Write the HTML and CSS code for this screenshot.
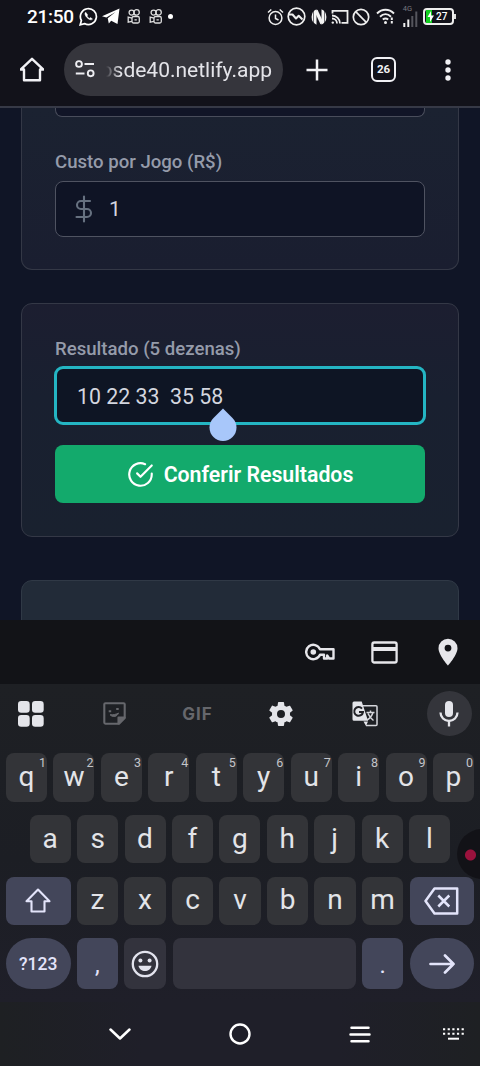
FILE: index.html
```html
<!DOCTYPE html>
<html lang="pt-BR">
<head>
<meta charset="utf-8">
<meta name="viewport" content="width=device-width, initial-scale=1">
<title>Conferir Resultados</title>
<link rel="stylesheet" href="styles.css">
</head>
<body>
<div class="phone">
  <header class="status">
    <span class="clock">21:50</span>
    <svg class="st-wa" width="19" height="19" viewBox="0 0 19 19" fill="none" stroke="#fff" stroke-width="1.7"><path d="M1.2 17.8 2.4 13.500A8 8 0 1 1 5.500 16.600Z"/><path d="M6.700 5.200c-1.500 1-.7 3.400 1.400 5.500s4.300 2.800 5.400 1.400l-1.900-1.500-1.200.8c-1.200-.5-1.900-1.200-2.400-2.400l.7-1z" fill="#fff" stroke-width=".5"/></svg>
    <svg class="st-tg" width="18" height="17" viewBox="0 0 18 17"><path fill="#fff" d="M0 8.200 17.500.5 15.500 16 9.200 12.700 6.800 15.500 5.700 10.300 13.500 4 4.400 9.500Z"/></svg>
    <svg class="st-kw" width="13" height="15" viewBox="0 0 13 15" fill="none" stroke="#ddd" stroke-width="1.300"><circle cx="4.600" cy="3.600" r="2.500"/><circle cx="9.600" cy="3.400" r="2.700"/><rect x="5" y="7.500" width="7.300" height="6.500" rx="1.500"/><path d="M5 9.200 1.200 8.200v5l3.800-.8M7.500 10.800h2.300"/></svg>
    <svg class="st-kw2" width="13" height="15" viewBox="0 0 13 15" fill="none" stroke="#ddd" stroke-width="1.300"><circle cx="4.600" cy="3.600" r="2.500"/><circle cx="9.600" cy="3.400" r="2.700"/><rect x="5" y="7.500" width="7.300" height="6.500" rx="1.500"/><path d="M5 9.200 1.200 8.200v5l3.800-.8M7.500 10.800h2.300"/></svg>
    <i class="st-dot"></i>
    <div class="status-right">
      <svg width="17" height="18" viewBox="0 0 17 18" fill="none" stroke="#eee" stroke-width="1.500"><circle cx="8.500" cy="10" r="6.400"/><path d="M8.500 6.500V10.500l3 1.500M1 4.500 4.300 1.500M16 4.500 12.700 1.500"/></svg>
      <svg width="19" height="19" viewBox="0 0 19 19" fill="none" stroke="#eee" stroke-width="1.700"><circle cx="9.500" cy="9.500" r="8.300"/><path d="M2 7.500 5.500 7.500 9 11.500 11.700 8.700 15.500 12.500" stroke-width="2" stroke-linejoin="round"/></svg>
      <svg width="18" height="18" viewBox="0 0 18 18"><path fill="#f4f4f4" d="M6.500 1.300A8.500 8.500 0 0 0 6.500 16.700ZM11.500 1.300A8.500 8.500 0 0 1 11.500 16.700Z"/><path d="M6 2.500 12 15.500" stroke="#f4f4f4" stroke-width="3.400"/><path d="M3.500 3v12M14.500 3v12" stroke="#12121a" stroke-width=".6"/></svg>
      <svg width="18" height="16" viewBox="0 0 18 16" fill="none" stroke="#eee" stroke-width="1.800"><path d="M1.500 4.500V1.800h15v12h-6M1 6.500a8 8 0 0 1 8 8M1 9.500a5 5 0 0 1 5 5"/><circle cx="1.800" cy="13.600" r="1.200" fill="#eee" stroke="none"/></svg>
      <svg width="18" height="18" viewBox="0 0 18 18" fill="none" stroke="#eee" stroke-width="1.700"><circle cx="9" cy="9" r="7.700"/><path d="M3.700 3.700 14.300 14.300"/></svg>
      <svg class="wifi" width="20" height="17" viewBox="0 0 20 17" fill="none" stroke="#eee" stroke-width="1.900"><path d="M1 5.500c5-5 12-5 17 0M4 8.700c3.300-3.200 7.700-3.200 11 0M6.800 11.600c1.800-1.500 3.600-1.500 5.400 0"/><circle cx="9.500" cy="14.500" r="1.500" fill="#eee" stroke="none"/><path d="M15.800 9.500v2.500M15.800 13v2.500" stroke-width="2"/></svg>
      <div class="signal"><span>4G</span><svg width="15" height="17" viewBox="0 0 15 17"><path d="M1.300 17v-4M5.300 17V9.500" stroke="#eee" stroke-width="2"/><path d="M9.300 17V6M13.300 17V1.500" stroke="#55555d" stroke-width="2"/></svg></div>
      <div class="battery"><svg width="8" height="13" viewBox="0 0 8 13"><path fill="#13cf20" d="M0 0h6v13H0z"/><path fill="#fff" d="M5 1 1.500 7H4v5l4-6.500H5z"/></svg><span>27</span></div>
    </div>
  </header>

  <nav class="toolbar">
    <svg class="home" width="24" height="25" viewBox="0 0 24 25" fill="none" stroke="#f1f1f5" stroke-width="2.400" stroke-linejoin="round"><path d="M.8 12.500H4V23.200H20V12.500h3.200L12 1.800Z"/></svg>
    <div class="omnibox">
      <svg width="20" height="18" viewBox="0 0 20 18" fill="none" stroke="#eeeef2" stroke-width="1.900"><circle cx="4" cy="4" r="2.900"/><path d="M9.500 4H19M.8 13.500H9.500"/><circle cx="15.700" cy="13.300" r="2.900"/></svg>
      <div class="url"><span>osde40.netlify.app</span></div>
    </div>
    <svg class="plus" width="22" height="22" viewBox="0 0 22 22" stroke="#f1f1f5" stroke-width="2.500"><path d="M11 .5v21M.5 11h21"/></svg>
    <div class="tabs">26</div>
    <svg class="dots" width="6" height="22" viewBox="0 0 6 22" fill="#f1f1f5"><circle cx="3" cy="3" r="2.700"/><circle cx="3" cy="11" r="2.700"/><circle cx="3" cy="19" r="2.700"/></svg>
  </nav>

  <main class="page">
    <section class="card card-cost">
      <div class="field-tail"></div>
      <label class="label">Custo por Jogo (R$)</label>
      <div class="field">
        <svg width="18" height="28" viewBox="0 0 18 28" fill="none" stroke="#667180" stroke-width="2.100" stroke-linecap="round" stroke-linejoin="round"><path d="M9 1.500v25M15 6H6a4 4 0 0 0 0 8h6a4 4 0 0 1 0 8H1.500"/></svg>
        <span>1</span>
      </div>
    </section>
    <section class="card card-result">
      <label class="label">Resultado (5 dezenas)</label>
      <div class="field field-focus"><span>10 22 33&nbsp; 35 58</span>
        <svg class="handle" width="28" height="33" viewBox="0 0 28 33"><path fill="#a8c7fa" d="M14 .5 23.500 9.900A13.500 13.500 0 1 1 4.500 9.900Z"/></svg>
      </div>
      <button class="submit">
        <svg width="27" height="27" viewBox="0 0 24 24" fill="none" stroke="#fff" stroke-width="1.900" stroke-linecap="round" stroke-linejoin="round"><path d="M22 11.080V12a10 10 0 1 1-5.930-9.140"/><path d="m9 11 3 3L22 4"/></svg>
        <span>Conferir Resultados</span>
      </button>
    </section>
    <section class="card card-next"></section>
  </main>

  <div class="autofill">
    <svg width="30" height="18" viewBox="0 0 30 18" fill="none" stroke="#e6e6ea" stroke-width="2.400" stroke-linejoin="round"><path d="M15 6.200A7.200 7.200 0 1 0 15 11.800H19V15.500h3.200v-3l2 3H28.500V6.200Z"/><circle cx="8.300" cy="9" r="2.800" fill="#e6e6ea" stroke="none"/></svg>
    <svg width="27" height="23" viewBox="0 0 27 23" fill="none" stroke="#e6e6ea" stroke-width="2.300"><rect x="1.400" y="1.500" width="24.200" height="20" rx="1.800"/><path d="M1.400 8h24.200" stroke-width="4"/></svg>
    <svg width="20" height="28" viewBox="0 0 20 28"><path fill="#e6e6ea" fill-rule="evenodd" d="M10 .7A9.500 9.500 0 0 0 .5 10.200C.5 17 10 27.500 10 27.500S19.500 17 19.500 10.200A9.500 9.500 0 0 0 10 .7Zm0 6a3.400 3.400 0 1 1 0 6.800 3.400 3.400 0 0 1 0-6.800Z"/></svg>
  </div>

  <div class="keyboard">
    <div class="tools">
      <div class="tool"><svg width="26" height="26" viewBox="0 0 26 26" fill="#e4e5ea"><rect x="0" y="0" width="11.700" height="11.700" rx="3.200"/><rect x="14" y="0" width="11.700" height="11.700" rx="3.200"/><rect x="0" y="14" width="11.700" height="11.700" rx="3.200"/><rect x="14" y="14" width="11.700" height="11.700" rx="3.200"/></svg></div>
      <div class="tool"><svg width="23" height="23" viewBox="0 0 23 23" fill="none" stroke="#66676c" stroke-width="2.100" stroke-linejoin="round"><path d="M1.300 2.300Q1.300 1.200 2.400 1.200H20.600Q21.700 1.200 21.700 2.300V16L16 21.700H2.400Q1.300 21.700 1.300 20.600Z"/><path d="M21.500 15.500H15.500V21.500Z" fill="#66676c"/><path d="M7 12.700c3 3.200 7.200 2 8.500-1.700-2.500 1.500-5 1.900-8.500 1.700Z" fill="#66676c" stroke-width="1"/><path d="M5.700 9.300h2.500M13.200 7h2.500"/></svg></div>
      <div class="tool gif">GIF</div>
      <div class="tool"><svg width="30" height="30" viewBox="0 0 24 24" fill="#e4e5ea"><path d="M19.140 12.940c.04-.3.060-.61.060-.94 0-.32-.02-.64-.07-.94l2.030-1.580c.18-.14.230-.41.120-.61l-1.920-3.320c-.12-.22-.37-.29-.59-.22l-2.390.96c-.5-.38-1.030-.7-1.620-.94L14.400 2.810c-.04-.24-.24-.41-.48-.41h-3.840c-.24 0-.43.170-.47.410L9.250 5.350c-.59.240-1.130.570-1.620.940L5.240 5.330c-.22-.08-.47 0-.59.220L2.740 8.870c-.12.210-.08.470.12.610l2.030 1.580c-.05.3-.09.630-.09.940s.02.640.070.940l-2.030 1.580c-.18.140-.23.410-.12.610l1.920 3.320c.12.220.37.290.59.220l2.390-.96c.5.380 1.030.7 1.620.940l.36 2.540c.05.240.24.410.48.410h3.840c.24 0 .44-.17.470-.41l.36-2.540c.59-.24 1.130-.56 1.620-.94l2.390.96c.22.080.47 0 .59-.22l1.920-3.320c.12-.22.070-.47-.12-.61zM12 15.200a3.200 3.200 0 1 1 0-6.400 3.200 3.200 0 0 1 0 6.400z"/></svg></div>
      <div class="tool"><svg width="26" height="26" viewBox="0 0 26 26" fill="none"><path d="M10 4.700H24q1 0 1 1V23.500q0 1-1 1H14" stroke="#d5d6db" stroke-width="1.500"/><path fill="#e4e5ea" d="M2 .5H9.700L16 19.800H2Q.5 19.800.5 18.300V2Q.5.500 2 .5ZM11.500 20.500H16l-2 4.500Z"/><path d="M10 7.600A4.400 4.400 0 1 0 11 11H7" stroke="#202126" stroke-width="2"/><path d="M14.500 11.500h8M18.500 9.500v2M21 11.500q-1.500 5-6 7.500M16 12.500q2 4.500 5.500 7" stroke="#d5d6db" stroke-width="1.500"/></svg></div>
      <div class="tool mic"><svg width="20" height="27" viewBox="0 0 20 27" fill="none" stroke="#e4e5ea" stroke-width="2.300"><rect x="6" y="1" width="8" height="16" rx="4" fill="#e4e5ea" stroke="none"/><path d="M1.500 12.500a8.500 8.500 0 0 0 17 0M10 21v5.500"/></svg></div>
    </div>
    <div class="keys">
      <div class="row">
        <div class="key">q<sup>1</sup></div><div class="key">w<sup>2</sup></div><div class="key">e<sup>3</sup></div><div class="key">r<sup>4</sup></div><div class="key">t<sup>5</sup></div><div class="key">y<sup>6</sup></div><div class="key">u<sup>7</sup></div><div class="key">i<sup>8</sup></div><div class="key">o<sup>9</sup></div><div class="key">p<sup>0</sup></div>
      </div>
      <div class="row row-mid">
        <div class="key">a</div><div class="key">s</div><div class="key">d</div><div class="key">f</div><div class="key">g</div><div class="key">h</div><div class="key">j</div><div class="key">k</div><div class="key">l</div>
      </div>
      <div class="row">
        <div class="key wide accent"><svg width="26" height="25" viewBox="0 0 26 25" fill="none" stroke="#e3e4fa" stroke-width="2.100" stroke-linejoin="round"><path d="M13 1.500 24.500 13.200H19.500V23.500H6.500V13.200H1.500Z"/></svg></div>
        <div class="key">z</div><div class="key">x</div><div class="key">c</div><div class="key">v</div><div class="key">b</div><div class="key">n</div><div class="key">m</div>
        <div class="key wide accent"><svg width="35" height="28" viewBox="0 0 35 28" fill="none" stroke="#e3e4fa" stroke-width="2.500" stroke-linejoin="round"><path d="M1.500 14 10.500 1.500H33.200V26.500H10.500ZM14.300 8.500 25.300 19.500M25.300 8.500 14.300 19.500"/></svg></div>
      </div>
      <div class="row row-last">
        <div class="key wide accent round sym">?123</div>
        <div class="key accent punct">,</div>
        <div class="key dim"><svg width="28" height="28" viewBox="0 0 28 28" fill="none" stroke="#e3e4ee" stroke-width="2.300"><circle cx="14" cy="14" r="12.200"/><g fill="#e3e4ee" stroke="none"><circle cx="9.400" cy="10.500" r="2"/><circle cx="18.600" cy="10.500" r="2"/><path d="M7.500 15.800h13c-1.200 7-11.800 7-13 0Z"/></g></svg></div>
        <div class="key space dim"></div>
        <div class="key accent punct">.</div>
        <div class="key wide accent round"><svg width="26" height="20" viewBox="0 0 26 20" fill="none" stroke="#e3e4fa" stroke-width="2.700" stroke-linecap="round" stroke-linejoin="round"><path d="M1.500 10H24.500M16 1.500 24.500 10 16 18.500"/></svg></div>
      </div>
    </div>
    <div class="recorder"></div>
  </div>

  <footer class="nav">
    <svg width="22" height="13" viewBox="0 0 22 13" fill="none" stroke="#fff" stroke-width="2.500" stroke-linecap="round" stroke-linejoin="round"><path d="M1.500 1.500 11 10.500 20.500 1.500"/></svg>
    <svg width="22" height="22" viewBox="0 0 22 22" fill="none" stroke="#fff" stroke-width="2.400"><circle cx="11" cy="11" r="9.500"/></svg>
    <svg width="22" height="17" viewBox="0 0 22 17" stroke="#fff" stroke-width="2.500" stroke-linecap="round"><path d="M2.500 1.700h17M1.500 8.500h19M2.500 15.300h17"/></svg>
    <svg class="kb" width="21" height="12" viewBox="0 0 21 12" stroke="#fff" stroke-width="2"><path d="M0 1.300h21M0 5.800h21" stroke-dasharray="2.200 2.450"/><path d="M5 10.700h11"/></svg>
  </footer>
</div>
</body>
</html>
```

FILE: styles.css
```css
* { box-sizing: border-box; }
body { margin: 0; background: #101526; font-family: Roboto, "Noto Sans", sans-serif; }
svg { display: block; flex: none; }
.phone { width: 480px; height: 1066px; overflow: hidden; display: flex; flex-direction: column; }

/* status bar */
.status { height: 33px; flex: none; background: #12121a; display: flex; align-items: center; padding: 0 26px 0 27px; color: #fff; }
.clock { font-size: 19px; font-weight: 500; width: 52px; letter-spacing: -.3px; white-space: nowrap; }
.st-tg { margin-left: 4px; }
.st-kw { margin-left: 7px; }
.st-kw2 { margin-left: 9px; }
.st-dot { width: 5px; height: 5px; border-radius: 50%; background: #fff; margin-left: 6px; }
.status-right { margin-left: auto; display: flex; align-items: center; gap: 3.300px; }
.wifi { margin-left: 3px; }
.signal { width: 15px; height: 21px; margin: -1px 2px 0 3px; display: flex; flex-direction: column; position: relative; justify-content: flex-end; }
.signal span { position: absolute; left: 0; top: -1px; font-size: 7.500px; line-height: 8px; color: #77777f; }
.battery { width: 31px; height: 17px; border: 2px solid #eee; border-radius: 4px; display: flex; align-items: center; gap: 2px; padding-left: 1px; position: relative; font-size: 10px; font-weight: 500; }
.battery::after { content: ""; position: absolute; right: -4px; top: 4px; width: 2px; height: 5px; background: #ddd; }

/* browser toolbar */
.toolbar { height: 75px; flex: none; background: #12121a; border-bottom: 2px solid #363946; display: flex; align-items: center; padding: 0 29px 0 20px; }
.omnibox { width: 219px; height: 53px; margin-left: 20px; border-radius: 27px; background: #35353c; display: flex; align-items: center; padding: 0 11px; }
.omnibox svg { margin-bottom: 1px; }
.url { width: 174px; margin-left: 3px; display: flex; justify-content: flex-end; overflow: hidden; font-size: 21px; line-height: 30px; color: #e4e4e9; white-space: nowrap; -webkit-mask-image: linear-gradient(90deg, transparent 8px, #000 22px); mask-image: linear-gradient(90deg, transparent 8px, #000 22px); }
.plus { margin-left: 23px; }
.tabs { width: 25px; height: 25px; margin: 0 0 0 43px; border: 2.300px solid #f1f1f5; border-radius: 6px; color: #f1f1f5; font-size: 11.500px; font-weight: 700; line-height: 21px; text-align: center; }
.dots { margin-left: auto; }

/* page */
.page { height: 512px; flex: none; overflow: hidden; background: #101526; padding: 0 21px; }
.card { border: 1px solid #343846; border-radius: 11px; background: #1a2030; padding: 0 33px; width: 438px; }
.card-cost { height: 162px; border-top: 0; border-radius: 0 0 11px 11px; background: linear-gradient(#1b2231, #1a1e30); }
.card-result { height: 234px; margin-top: 33px; padding-top: 33px; background: linear-gradient(#1c1e30, #192030 40%, #19212f); }
.card-next { height: 60px; margin-top: 43px; background: #222b38; border-color: #303946; }
.field-tail { height: 9px; border: 1px solid #494d5b; border-top: 0; border-radius: 0 0 7px 7px; background: #111527; }
.label { display: block; height: 30px; font-size: 18.600px; font-weight: 500; line-height: 24px; color: #959baa; white-space: nowrap; }
.card-result .label { height: 29px; }
.card-cost .label { margin-top: 34px; }
.card-cost .label { line-height: 23px; }
.field { height: 56px; border: 1px solid #4f5361; border-radius: 8px; background: #0f1425; display: flex; align-items: center; padding-left: 19px; font-size: 21px; color: #d3d6df; }
.field svg + span { margin-left: 16px; }
.field-focus { position: relative; height: 59px; margin: 0 -1px; border: 3px solid #24b5c3; border-radius: 9px; background: #0e1524; padding: 1px 0 0 20px; font-size: 21.300px; }
.handle { position: absolute; left: 152px; top: 39px; }
.submit { width: 100%; height: 58px; margin-top: 20px; border: 0; border-radius: 8px; background: #13aa6c; color: #fff; display: flex; align-items: center; justify-content: center; gap: 10px; padding: 0; font: 600 21.300px Roboto, sans-serif; }

/* autofill bar */
.autofill { height: 64px; flex: none; background: #121317; display: flex; align-items: center; justify-content: flex-end; gap: 36px; padding-right: 22px; }
.autofill svg:last-child { margin-left: 4px; }

/* keyboard */
.keyboard { position: relative; height: 318px; flex: none; background: linear-gradient(#1e2024, #1c1e24 55%, #1f1f29); }
.tools { height: 59px; display: grid; grid-template-columns: repeat(5, 83.500px) 45px; padding: 0 8px; align-items: center; }
.tool { width: 45px; height: 45px; display: flex; align-items: center; justify-content: center; }
.gif { font: 700 17px Inter, sans-serif; color: #66676c; letter-spacing: 1px; }
.mic { border-radius: 50%; background: #34353b; margin-left: 1px; }
.keys { padding: 10px 6px 0; display: flex; flex-direction: column; gap: 13.300px; }
.row { display: flex; gap: 6.400px; height: 48.500px; }
.row-mid { padding: 0 24px 0 23.700px; }
.row-last { height: 50.500px; }
.key { flex: 1 1 0; position: relative; border-radius: 8px; background: #333438; color: #e3e4e8; display: flex; align-items: center; justify-content: center; font-size: 28px; line-height: 46px; padding: 0 0 1px 0; }
.key sup { position: absolute; right: 1px; top: 4px; font-size: 12.500px; line-height: 12px; color: #c4c5ca; }
.wide { flex: 0 0 64.500px; padding: 0; }
.accent { background: #43465a; color: #e3e4fa; }
.dim { background: #33333d; padding: 0 1px 0 0; }
.round { border-radius: 26px; }
.sym { font-size: 17.500px; font-weight: 500; }
.punct { font-size: 24px; padding-top: 3px; }
.space { flex: 0 0 183.200px; }
.recorder { position: absolute; right: -27px; top: 145px; width: 50px; height: 50px; border-radius: 50%; background: radial-gradient(circle at 13.500px 26px, #9b123d 5px, #121217 6px); }

/* system navigation */
.nav { flex: 1; background: linear-gradient(90deg, #1e2023, #1f1f29 30%, #1f1f29 70%, #1e2023); display: grid; grid-template-columns: 120px 120px 120px; column-gap: 0; padding-left: 60px; position: relative; justify-items: center; align-items: center; }
.nav .kb { position: absolute; right: 16px; top: 26px; }
```
